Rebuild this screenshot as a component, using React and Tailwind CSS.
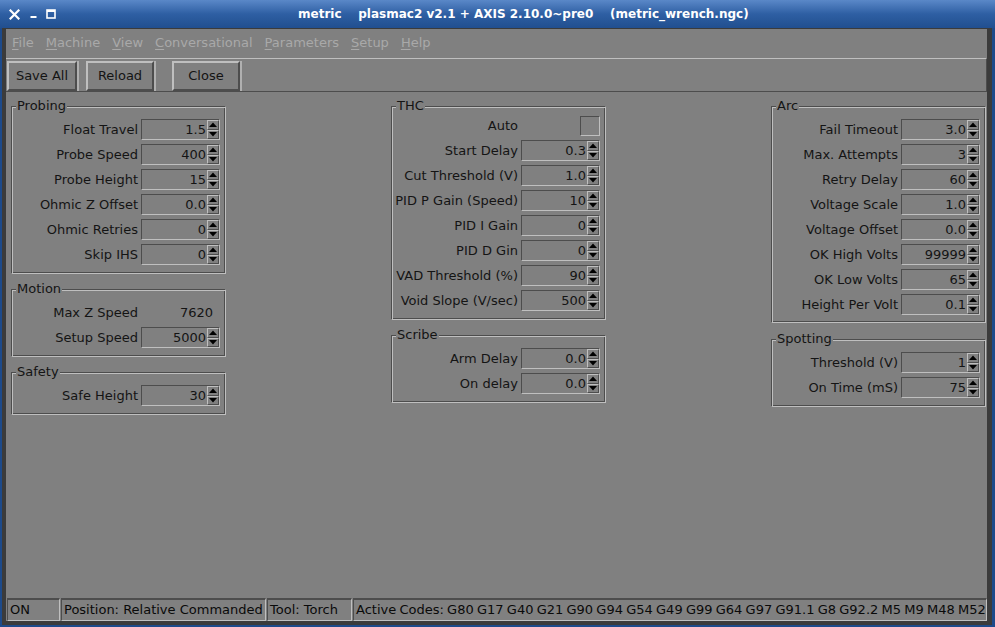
import React from "react";

function WinIcons() {
  return (
    <div className="flex items-center h-full pl-[9px]">
      <svg width="11" height="11" viewBox="0 0 11 11" className="mt-[1px]">
        <path d="M1.5 1.5 L9.5 9.5 M9.5 1.5 L1.5 9.5" stroke="#fff" strokeWidth="2.2" strokeLinecap="square" />
      </svg>
      <svg width="8" height="11" viewBox="0 0 8 11" className="ml-[10px] mt-[1px]">
        <rect x="0.5" y="7" width="6" height="2" fill="#fff" />
      </svg>
      <svg width="10" height="10" viewBox="0 0 10 10" className="ml-[8px]">
        <rect x="1" y="1" width="8" height="8" fill="none" stroke="#fff" strokeWidth="1.6" />
        <rect x="1" y="1" width="8" height="2" fill="#fff" />
      </svg>
    </div>
  );
}

function Arrow({ up }) {
  return (
    <div className="flex-1 flex items-center justify-center border border-t-[#bfbfbf] border-l-[#bfbfbf] border-b-[#4d4d4d] border-r-[#4d4d4d]">
      <svg width="8" height="5" viewBox="0 0 8 5">
        {up ? <path d="M0 5 L4 0.5 L8 5Z" fill="#000" /> : <path d="M0 0 L4 4.5 L8 0Z" fill="#000" />}
      </svg>
    </div>
  );
}

function Spin({ value }) {
  return (
    <div className="flex h-[21px] w-[79px] border border-t-[#4d4d4d] border-l-[#4d4d4d] border-b-[#bfbfbf] border-r-[#bfbfbf]">
      <div className="flex-1 flex items-center justify-end pr-[1px] leading-none">{value}</div>
      <div className="w-[12px] flex flex-col">
        <Arrow up />
        <Arrow />
      </div>
    </div>
  );
}

function Row({ label, children }) {
  return (
    <div className="flex h-[25px] items-center justify-end gap-[3px]">
      <span className="leading-none">{label}</span>
      {children}
    </div>
  );
}

function SpinRow({ label, value }) {
  return (
    <Row label={label}>
      <Spin value={value} />
    </Row>
  );
}

function Group({ title, children, extra = "pt-[3px] pb-[6px]" }) {
  return (
    <fieldset
      className={`w-[215px] border border-t-[#4d4d4d] border-l-[#4d4d4d] border-b-[#bfbfbf] border-r-[#bfbfbf] shadow-[inset_1px_1px_0_#bfbfbf,inset_-1px_-1px_0_#4d4d4d] pr-[5px] ${extra}`}
    >
      <legend className="ml-[4px] px-[1px] leading-[16px] bg-[#808080]">{title}</legend>
      {children}
    </fieldset>
  );
}

function ToolButton({ children, w }) {
  return (
    <div className="flex h-full">
      <div
        className={`${w} h-[30px] flex items-center justify-center border-2 border-t-[#bfbfbf] border-l-[#bfbfbf] border-b-[#4d4d4d] border-r-[#4d4d4d]`}
      >
        {children}
      </div>
      <div className="w-[2px] h-[30px] bg-[#b0b0b0]" />
    </div>
  );
}

function Field({ children, w, extra = "" }) {
  return (
    <div
      className={`${w} ${extra} h-[23px] flex items-center pl-[2px] whitespace-nowrap overflow-hidden border border-t-[#4d4d4d] border-l-[#4d4d4d] border-b-[#bfbfbf] border-r-[#bfbfbf] border-t-2`}
    >
      {children}
    </div>
  );
}

function MenuItem({ first, rest }) {
  return (
    <span className="px-[6px]">
      <span className="underline underline-offset-[2px] decoration-1">{first}</span>
      {rest}
    </span>
  );
}

export default function App() {
  return (
    <div className="w-[995px] h-[627px] bg-[#1d4a8a] flex flex-col font-['DejaVu_Sans',sans-serif] text-[13px] text-[#141414] overflow-hidden">
      {/* title bar */}
      <div className="h-[28px] flex items-center bg-gradient-to-b from-[#5a88c8] via-[#2e5fa3] to-[#214f8f]">
        <WinIcons />
        <div className="ml-[242px] font-bold text-white whitespace-pre text-[12px] leading-none">
          {"metric    plasmac2 v2.1 + AXIS 2.10.0~pre0    (metric_wrench.ngc)"}
        </div>
      </div>

      {/* dark frame */}
      <div className="flex-1 ml-[2px] mr-[3px] mb-[2px] bg-[#3b3b3b] pl-[4px] pr-[5px] pt-[1px] pb-[4px] flex flex-col">
        <div className="flex-1 bg-[#808080] flex flex-col">
          {/* menubar */}
          <div className="h-[29px] flex items-center text-[#a9a9a9] pb-[1px]">
            <MenuItem first="F" rest="ile" />
            <MenuItem first="M" rest="achine" />
            <MenuItem first="V" rest="iew" />
            <MenuItem first="C" rest="onversational" />
            <MenuItem first="P" rest="arameters" />
            <MenuItem first="S" rest="etup" />
            <MenuItem first="H" rest="elp" />
          </div>

          {/* toolbar */}
          <div className="h-[34px] border-t border-t-[#bfbfbf] border-b border-b-[#4d4d4d] border-r border-r-[#4d4d4d] pt-[2px] flex items-start pl-[1px]">
            <ToolButton w="w-[70px]">Save All</ToolButton>
            <div className="w-[7px]" />
            <ToolButton w="w-[68px]">Reload</ToolButton>
            <div className="w-[16px]" />
            <ToolButton w="w-[68px]">Close</ToolButton>
          </div>

          {/* main */}
          <div className="flex-1 flex justify-between pl-[5px] pr-[1px] pt-[6px]">
            <div className="flex flex-col gap-[7px]">
              <Group title="Probing">
                <SpinRow label="Float Travel" value="1.5" />
                <SpinRow label="Probe Speed" value="400" />
                <SpinRow label="Probe Height" value="15" />
                <SpinRow label="Ohmic Z Offset" value="0.0" />
                <SpinRow label="Ohmic Retries" value="0" />
                <SpinRow label="Skip IHS" value="0" />
              </Group>
              <Group title="Motion">
                <Row label="Max Z Speed">
                  <div className="w-[79px] text-right pr-[7px] leading-none">7620</div>
                </Row>
                <SpinRow label="Setup Speed" value="5000" />
              </Group>
              <Group title="Safety">
                <SpinRow label="Safe Height" value="30" />
              </Group>
            </div>

            <div className="flex flex-col gap-[7px]">
              <Group title="THC">
                <div className="flex h-[21px] items-center justify-end gap-[3px] pb-[4px]">
                  <span className="leading-none">Auto</span>
                  <div className="w-[79px] flex justify-end">
                    <div className="w-[20px] h-[20px] border border-t-[#4d4d4d] border-l-[#4d4d4d] border-b-[#bfbfbf] border-r-[#bfbfbf]" />
                  </div>
                </div>
                <SpinRow label="Start Delay" value="0.3" />
                <SpinRow label="Cut Threshold (V)" value="1.0" />
                <SpinRow label="PID P Gain (Speed)" value="10" />
                <SpinRow label="PID I Gain" value="0" />
                <SpinRow label="PID D Gin" value="0" />
                <SpinRow label="VAD Threshold (%)" value="90" />
                <SpinRow label="Void Slope (V/sec)" value="500" />
              </Group>
              <Group title="Scribe">
                <SpinRow label="Arm Delay" value="0.0" />
                <SpinRow label="On delay" value="0.0" />
              </Group>
            </div>

            <div className="flex flex-col gap-[8px]">
              <Group title="Arc" extra="pt-[3px] pb-[5px]">
                <SpinRow label="Fail Timeout" value="3.0" />
                <SpinRow label="Max. Attempts" value="3" />
                <SpinRow label="Retry Delay" value="60" />
                <SpinRow label="Voltage Scale" value="1.0" />
                <SpinRow label="Voltage Offset" value="0.0" />
                <SpinRow label="OK High Volts" value="99999" />
                <SpinRow label="OK Low Volts" value="65" />
                <SpinRow label="Height Per Volt" value="0.1" />
              </Group>
              <Group title="Spotting">
                <SpinRow label="Threshold (V)" value="1" />
                <SpinRow label="On Time (mS)" value="75" />
              </Group>
            </div>
          </div>

          {/* status bar */}
          <div className="h-[23px] flex gap-[1px] pl-[1px] text-[#0a0a0a]">
            <Field w="w-[53px]">ON</Field>
            <Field w="w-[205px]">Position: Relative Commanded</Field>
            <Field w="w-[85px]">Tool: Torch</Field>
            <Field w="flex-1" extra="[word-spacing:-0.9px]">
              Active Codes: G80 G17 G40 G21 G90 G94 G54 G49 G99 G64 G97 G91.1 G8 G92.2 M5 M9 M48 M52
            </Field>
          </div>
        </div>
      </div>
    </div>
  );
}
